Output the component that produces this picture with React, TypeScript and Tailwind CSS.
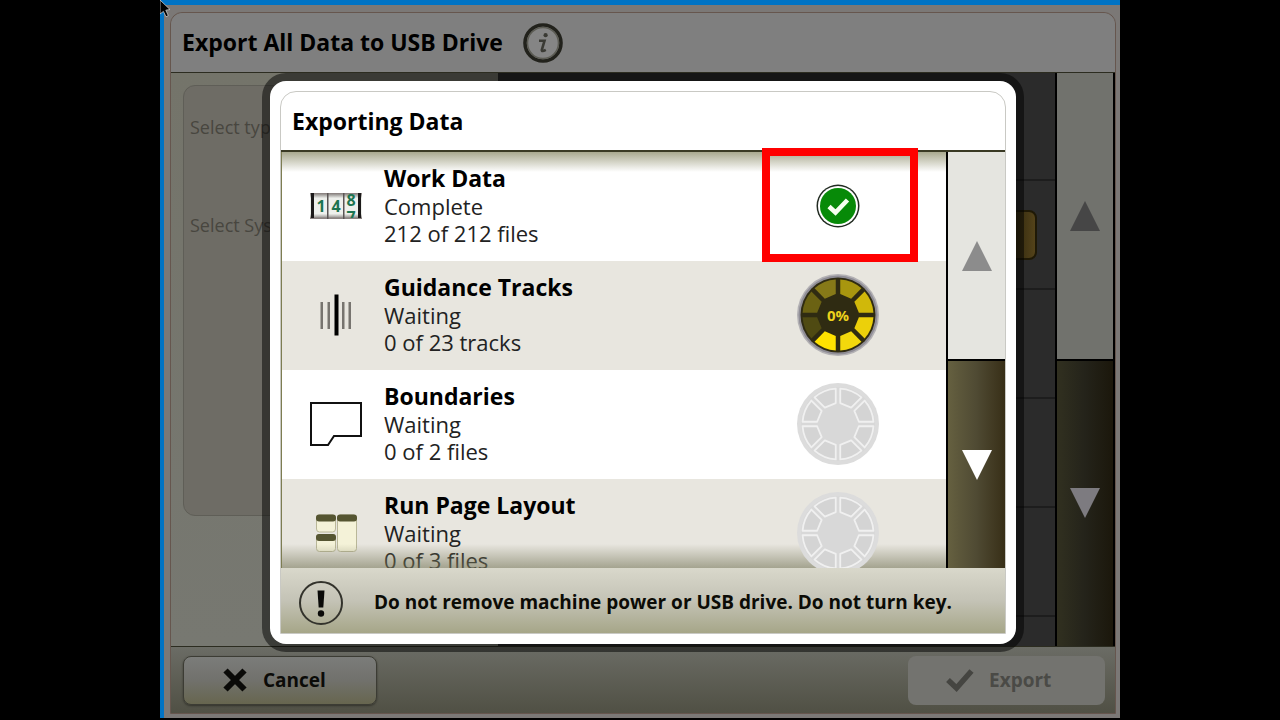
import React from "react";

type Status = "complete" | "active" | "idle";

interface ExportItem {
  name: string;
  state: string;
  progress: string;
  status: Status;
  icon: React.ReactNode;
}

const SEGMENT_COLORS = [
  "#a8960f",
  "#d0b80a",
  "#ecd00a",
  "#f2d80c",
  "#ffe200",
  "#4f4a12",
  "#6b6213",
  "#867918",
];

// One slice of the eight-part ring, with a gap of even width between slices
const segmentPath = (index: number, outer: number, inner: number, gap: number) => {
  const start = (index * Math.PI) / 4;
  const end = start + Math.PI / 4;
  const point = (r: number, a: number) =>
    `${(41 + r * Math.sin(a)).toFixed(2)} ${(41 - r * Math.cos(a)).toFixed(2)}`;
  const o = Math.asin(gap / 2 / outer);
  const i = Math.asin(gap / 2 / inner);
  return `M${point(outer, start + o)} A${outer} ${outer} 0 0 1 ${point(outer, end - o)} L${point(
    inner,
    end - i
  )} L${point(inner, start + i)} Z`;
};

const ActiveRing: React.FC = () => (
  <svg viewBox="0 0 82 82" className="h-[82px] w-[82px]">
    <circle cx="41" cy="41" r="41" fill="#b3b1b4" />
    <circle cx="41" cy="41" r="39.5" fill="#8f8d96" />
    <circle cx="41" cy="41" r="37.5" fill="#2f2b12" />
    {SEGMENT_COLORS.map((color, i) => (
      <path key={i} d={segmentPath(i, 35.5, 21, 4.5)} fill={color} />
    ))}
    <text
      x="41"
      y="46.5"
      textAnchor="middle"
      fontSize="15"
      fontWeight="700"
      fill="#ecd21c"
    >
      0%
    </text>
  </svg>
);

const IdleRing: React.FC = () => (
  <svg viewBox="0 0 82 82" className="h-[82px] w-[82px]">
    <circle cx="41" cy="41" r="41" fill="#dcdcdc" />
    <circle cx="41" cy="41" r="37" fill="#d8d8d8" />
    {SEGMENT_COLORS.map((_, i) => (
      <path
        key={i}
        d={segmentPath(i, 35.5, 21, 4.5)}
        fill="#d4d4d4"
        stroke="#f0f0f0"
        strokeWidth="1.8"
        strokeLinejoin="round"
      />
    ))}
  </svg>
);

const CompleteMark: React.FC = () => (
  <svg viewBox="0 0 44 44" className="h-11 w-11">
    <circle cx="22" cy="22" r="21.5" fill="#222b22" />
    <circle cx="22" cy="22" r="20" fill="#ffffff" />
    <circle cx="22" cy="22" r="18" fill="#078a08" />
    <path d="M13 22.5 L19.5 28.5 L31.5 16" fill="none" stroke="#f6fff0" strokeWidth="4.6" />
  </svg>
);

const CounterIcon: React.FC = () => (
  <svg viewBox="0 0 52 28" className="h-7 w-[52px]">
    <defs>
      <linearGradient id="drum" x1="0" y1="0" x2="0" y2="1">
        <stop offset="0" stopColor="#7c7674" />
        <stop offset="0.2" stopColor="#eef0ec" />
        <stop offset="0.8" stopColor="#eef0ec" />
        <stop offset="1" stopColor="#7c7674" />
      </linearGradient>
      <clipPath id="drumClip">
        <rect x="0" y="2" width="52" height="24" />
      </clipPath>
    </defs>
    <rect x="0" y="1" width="52" height="26" fill="url(#drum)" />
    <rect x="0" y="1" width="52" height="1" fill="#8c8482" />
    <rect x="0" y="25.5" width="52" height="1.5" fill="#8c8482" />
    <rect x="1" y="1" width="3" height="25" fill="#1c1a1a" />
    <rect x="48" y="1" width="3" height="25" fill="#1c1a1a" />
    <rect x="17" y="1" width="1.5" height="26" fill="#5a5454" />
    <rect x="33" y="1" width="1.5" height="26" fill="#5a5454" />
    <g fill="#1c7450" fontSize="16" fontWeight="700" textAnchor="middle" clipPath="url(#drumClip)">
      <text x="11" y="20">1</text>
      <text x="26" y="20">4</text>
      <text x="41" y="14">8</text>
      <text x="41" y="31">7</text>
    </g>
  </svg>
);

const TracksIcon: React.FC = () => (
  <svg viewBox="0 0 52 42" className="h-[42px] w-[52px]">
    <g fill="#77746f">
      <rect x="10.5" y="8" width="2.5" height="27" />
      <rect x="17.5" y="8" width="2.5" height="27" />
      <rect x="32" y="8" width="2.5" height="27" />
      <rect x="38.5" y="8" width="2.5" height="27" />
    </g>
    <rect x="24.5" y="0.5" width="4" height="41" fill="#000000" />
  </svg>
);

const BoundaryIcon: React.FC = () => (
  <svg viewBox="0 0 52 44" className="h-11 w-[52px]">
    <path
      d="M1 1 H51 V34 H24 L18 43 H1 Z"
      fill="none"
      stroke="#111111"
      strokeWidth="2"
    />
  </svg>
);

const LayoutIcon: React.FC = () => (
  <svg viewBox="0 0 52 38" className="h-[38px] w-[52px]">
    <g fill="#f4f2d8" stroke="#b9b798" strokeWidth="1">
      <rect x="6.5" y="1" width="19" height="17" rx="3" />
      <rect x="6.5" y="20.5" width="19" height="17" rx="3" />
      <rect x="27.5" y="1" width="19" height="36.5" rx="3" />
    </g>
    <g fill="#555531">
      <rect x="6" y="0.5" width="20" height="7" rx="3" />
      <rect x="6" y="20" width="20" height="7" rx="3" />
      <rect x="27" y="0.5" width="20" height="7" rx="3" />
    </g>
  </svg>
);

const Triangle: React.FC<{ down?: boolean; className: string }> = ({ down, className }) => (
  <svg viewBox="0 0 30 30" className={`h-[30px] w-[30px] ${className}`} fill="currentColor">
    <path d={down ? "M0 0 H30 L15 30 Z" : "M15 0 L30 30 H0 Z"} />
  </svg>
);

const items: ExportItem[] = [
  {
    name: "Work Data",
    state: "Complete",
    progress: "212 of 212 files",
    status: "complete",
    icon: <CounterIcon />,
  },
  {
    name: "Guidance Tracks",
    state: "Waiting",
    progress: "0 of 23 tracks",
    status: "active",
    icon: <TracksIcon />,
  },
  {
    name: "Boundaries",
    state: "Waiting",
    progress: "0 of 2 files",
    status: "idle",
    icon: <BoundaryIcon />,
  },
  {
    name: "Run Page Layout",
    state: "Waiting",
    progress: "0 of 3 files",
    status: "idle",
    icon: <LayoutIcon />,
  },
];

const ExportRow: React.FC<{ item: ExportItem }> = ({ item }) => (
  <li className="flex h-[109px] items-center bg-white pr-[67px] pb-[2px] pl-7 even:bg-[#e8e6df]">
    <div className="flex w-[52px] shrink-0 justify-center">{item.icon}</div>
    <div className="ml-[22px] flex-1 text-[22px] leading-[27px] text-[#222222]">
      <h3 className="text-[23px] leading-[29px] font-bold text-black">{item.name}</h3>
      <p>{item.state}</p>
      <p>{item.progress}</p>
    </div>
    <div className="relative z-10 flex w-[82px] shrink-0 justify-center">
      {item.status === "complete" && <CompleteMark />}
      {item.status === "active" && <ActiveRing />}
      {item.status === "idle" && <IdleRing />}
    </div>
  </li>
);

const ExportDialog: React.FC = () => (
  <div
    role="dialog"
    aria-labelledby="dialog-title"
    className="w-full rounded-2xl bg-white p-[10px] ring-8 ring-black/50"
  >
    <div className="rounded-t-2xl border border-[#c9c9c4]">
      <header className="flex h-[58px] items-center px-[11px]">
        <h2 id="dialog-title" className="text-[23px] font-bold text-black">
          Exporting Data
        </h2>
      </header>

      <div className="relative flex h-[418px] border-t-2 border-[#3a3a24]">
        <div className="relative flex-1 overflow-hidden border-l border-[#7d7d52]">
          <ul>
            {items.map((item) => (
              <ExportRow key={item.name} item={item} />
            ))}
          </ul>
          <div className="absolute inset-x-0 top-0 h-5 bg-gradient-to-b from-[#a9a98f] to-transparent" />
          <div className="absolute inset-x-0 bottom-0 h-6 bg-gradient-to-t from-[#77775a]/60 to-transparent" />
        </div>

        <div className="flex w-[59px] flex-col border-l-2 border-black">
          <button
            type="button"
            aria-label="Scroll up"
            className="flex flex-1 items-center justify-center border-b-2 border-black bg-[#e5e5e0]"
          >
            <Triangle className="text-[#8c8c8c]" />
          </button>
          <button
            type="button"
            aria-label="Scroll down"
            className="flex flex-1 items-center justify-center bg-gradient-to-r from-[#656040] via-[#4f4a33] to-[#382f17]"
          >
            <Triangle down className="text-white" />
          </button>
        </div>

        {/* Highlight around the finished item */}
        <div className="pointer-events-none absolute -top-1 right-[87px] z-20 h-[114px] w-[156px] border-8 border-[#ff0000]" />
      </div>

      <footer className="flex h-[65px] items-center bg-gradient-to-b from-[#d9d8cb] via-[#c4c3b6] to-[#a6a688] pt-1 pl-[17px]">
        <svg viewBox="0 0 46 46" className="h-[46px] w-[46px] shrink-0">
          <circle cx="23" cy="23" r="21" fill="none" stroke="#33332c" strokeWidth="2" />
          <path d="M19.5 10.5 H26.5 L25.3 27.5 H20.7 Z" fill="#0a0a08" />
          <circle cx="23" cy="33.5" r="3.2" fill="#0a0a08" />
        </svg>
        <p className="ml-[30px] pb-[2px] text-[19px] leading-6 font-bold text-[#0c0c06]">
          Do not remove machine power or USB drive. Do not turn key.
        </p>
      </footer>
    </div>
  </div>
);

const App: React.FC = () => {
  return (
    <div className="flex min-h-screen justify-center bg-black font-['Open_Sans','Noto_Sans',sans-serif]">
      <div className="relative flex w-3/4 flex-col pb-[2px]">
        <div className="flex flex-1 flex-col border-t-[5px] border-l-[4px] border-[#0073c4] bg-[#7b7876] pt-[7px] pr-1 pb-1 pl-[6px]">
          <div className="flex flex-1 flex-col rounded-t-xl border border-[#66564e]">
            {/* Page header */}
            <header className="flex h-[59px] items-center gap-5 rounded-t-xl bg-[#7f7f7f] px-[11px]">
              <h1 className="text-[23px] font-bold text-black">Export All Data to USB Drive</h1>
              <button type="button" aria-label="Information">
                <svg viewBox="0 0 40 40" className="h-10 w-10">
                  <circle cx="20" cy="20" r="18" fill="#858585" stroke="#22221c" strokeWidth="3.6" />
                  <circle cx="20" cy="20" r="15.5" fill="none" stroke="#5c5c54" strokeWidth="1.5" />
                  <circle cx="22.6" cy="12.2" r="2.1" fill="#3a3a34" />
                  <path
                    d="M16 17.8 H21.5 L18.8 27 Q18.6 29 22.8 26.8"
                    fill="none"
                    stroke="#3a3a34"
                    strokeWidth="2.6"
                  />
                </svg>
              </button>
            </header>

            {/* Dimmed page body */}
            <main className="flex flex-1 border-y border-[#2c2c20]">
              <section className="w-[34.6%] shrink-0 bg-gradient-to-b from-[#74746a] to-[#777871] pt-3 pl-3">
                <div className="h-[431px] rounded-l-xl border border-[#5f5e57] bg-[#6e6c65] px-[6px] pt-[27px] text-[18px] leading-7 text-[#48463f]">
                  <p>Select type</p>
                  <p className="mt-[70px]">Select System</p>
                </div>
              </section>
              <section className="flex flex-1 flex-col bg-[#2b2b2b]">
                <div className="h-[108px] border-b-2 border-[#1d1d1d]" />
                <div className="flex h-[109px] items-center justify-end border-b-2 border-[#1d1d1d] pr-[18px]">
                  <div className="h-[50px] w-[60px] rounded-lg border-2 border-[#1f1906] bg-gradient-to-r from-[#2e260d] from-60% to-[#54431a]" />
                </div>
                <div className="h-[109px] border-b-2 border-[#1d1d1d]" />
                <div className="h-[109px] border-b-2 border-[#1d1d1d]" />
                <div className="h-[109px] border-b-2 border-[#1d1d1d]" />
              </section>
              <div className="flex w-[60px] flex-col border-x-2 border-black">
                <button
                  type="button"
                  aria-label="Page up"
                  className="flex flex-1 items-center justify-center border-b-2 border-black bg-[#71726d]"
                >
                  <Triangle className="text-[#464646]" />
                </button>
                <button
                  type="button"
                  aria-label="Page down"
                  className="flex flex-1 items-center justify-center bg-gradient-to-r from-[#313020] via-[#24231a] to-[#1b170b]"
                >
                  <Triangle down className="text-[#7d7b80]" />
                </button>
              </div>
            </main>

            {/* Page actions */}
            <footer className="flex h-[66px] items-center justify-between bg-gradient-to-b from-[#6b6c65] to-[#505044] pr-[10px] pl-3">
              <button
                type="button"
                className="flex h-[49px] w-[194px] items-center gap-4 rounded-lg border border-[#3c3c34] bg-gradient-to-b from-[#7b7c7a] via-[#71716c] to-[#67664f] pl-[39px] text-[19px] font-bold text-[#0b0b08] shadow-[0_1px_2px_#33332c]"
              >
                <svg viewBox="0 0 24 24" className="h-6 w-6">
                  <path d="M2.5 2.5 L21.5 21.5 M21.5 2.5 L2.5 21.5" stroke="#0a0a08" strokeWidth="6" />
                </svg>
                Cancel
              </button>
              <button
                type="button"
                disabled
                className="flex h-[49px] w-[197px] items-center gap-[14px] rounded-lg bg-[#73736f] pl-[37px] text-[19px] font-bold text-[#4a4a46]"
              >
                <svg viewBox="0 0 30 24" className="h-6 w-[30px]">
                  <path d="M3 12 L11.5 20 L26.5 3" fill="none" stroke="#454541" strokeWidth="5.5" />
                </svg>
                Export
              </button>
            </footer>
          </div>
        </div>

        <div className="absolute inset-0 pt-[81px] pr-[104px] pl-[110px]">
          <ExportDialog />
        </div>

        {/* Mouse pointer */}
        <svg viewBox="0 0 12 20" className="absolute top-0 left-0 h-5 w-3">
          <path
            d="M0 0 L10 9.5 L5.8 10.2 L8.3 15.6 L6 16.8 L3.4 11.4 L0 14 Z"
            fill="#000000"
            stroke="#c8c8c8"
            strokeWidth="0.8"
          />
        </svg>
      </div>
    </div>
  );
};

export default App;
